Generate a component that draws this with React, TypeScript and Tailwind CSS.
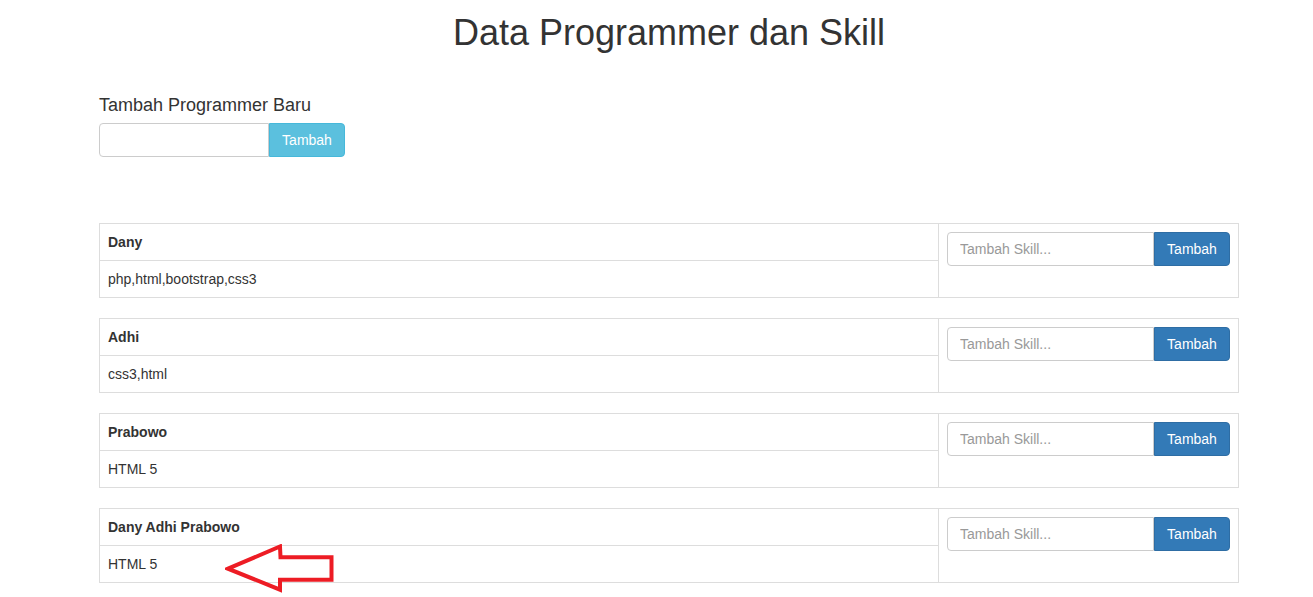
const programmers = [
  { name: "Dany", skills: "php,html,bootstrap,css3" },
  { name: "Adhi", skills: "css3,html" },
  { name: "Prabowo", skills: "HTML 5" },
  { name: "Dany Adhi Prabowo", skills: "HTML 5" },
];

function ProgrammerRow({ name, skills }: { name: string; skills: string }) {
  return (
    <div className="mb-5 flex border border-[#ddd]">
      <div className="w-[839px] border-r border-[#ddd]">
        <div className="h-[37px] border-b border-[#ddd] px-2 py-2 font-bold leading-5">{name}</div>
        <div className="h-[36px] px-2 py-2 leading-5">{skills}</div>
      </div>
      <div className="flex-1 p-2">
        <div className="flex h-[34px]">
          <input
            placeholder="Tambah Skill..."
            className="h-[34px] w-[207px] rounded-l-[4px] border border-[#ccc] px-3 text-[14px] text-[#555] outline-none placeholder:text-[#999]"
          />
          <button className="h-[34px] w-[76px] rounded-r-[4px] border border-[#2e6da4] bg-[#337ab7] pt-px text-[14px] text-white">
            Tambah
          </button>
        </div>
      </div>
    </div>
  );
}

export default function App() {
  return (
    <div className="relative min-h-screen bg-white font-['Liberation_Sans',Arial,sans-serif] text-[14px] text-[#333]">
      <div className="ml-[99px] w-[1140px]">
        <h1 className="pt-[13px] text-center text-[36px] leading-[39.6px]">Data Programmer dan Skill</h1>

        <div className="mt-[42px] text-[18px] leading-5">Tambah Programmer Baru</div>
        <div className="mt-2 flex h-[34px]">
          <input className="h-[34px] w-[170px] rounded-l-[4px] border border-[#ccc] px-3 outline-none" />
          <button className="h-[34px] w-[76px] rounded-r-[4px] border border-[#46b8da] bg-[#5bc0de] pt-px text-[14px] text-white">
            Tambah
          </button>
        </div>

        <div className="mt-[66px]">
          {programmers.map((p) => (
            <ProgrammerRow key={p.name} name={p.name} skills={p.skills} />
          ))}
        </div>
      </div>

      {/* annotation arrow */}
      <svg className="absolute left-[225px] top-[544px]" width="110" height="50" viewBox="0 0 110 50">
        <polygon
          points="3,24.7 55,2.5 55.5,13.3 106.5,13.3 106.5,35.7 55,35.7 55,45.7"
          fill="none"
          stroke="#ed1c24"
          strokeWidth="4"
          strokeLinejoin="miter"
        />
      </svg>
    </div>
  );
}
